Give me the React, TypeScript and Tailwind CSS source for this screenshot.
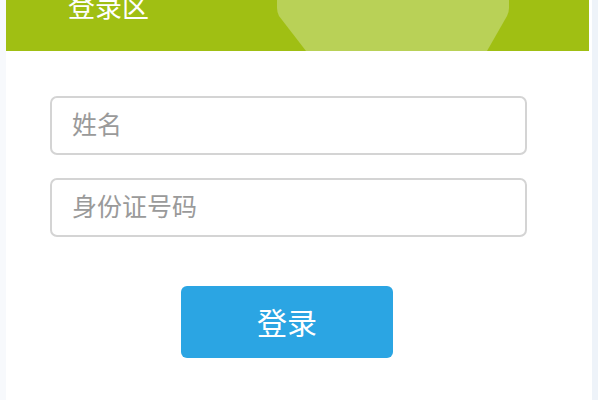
import React from "react";

export default function App() {
  const font = { fontFamily: '"Noto Sans CJK SC", "Noto Sans", sans-serif' };
  return (
    <div className="w-[600px] h-[400px] bg-white flex overflow-hidden" style={font}>
      <div className="w-[6px] shrink-0 bg-[#f7f9fc]" />
      <div className="w-[583px] shrink-0 flex flex-col">
        <div className="relative h-[51px] bg-[#a0bf13] overflow-hidden flex items-start pl-[62px]">
          <svg className="absolute left-[267px] top-0" width="240" height="51" viewBox="0 0 240 51">
            <path d="M4 -6 L236 -6 L236 8 Q236 12 234 16 L214 51 L33 51 L6 16 Q4 12 4 8 Z" fill="#b9d157" />
          </svg>
          <span className="relative text-white text-[27px] leading-none mt-[-8px]">登录区</span>
        </div>
        <div className="flex flex-col pl-[44px] pt-[45px]">
          <div className="w-[477px] h-[59px] border-2 border-[#d4d4d4] rounded-[7px] flex items-center pl-[20px] pb-[3px] text-[25px] text-[#9a9a9a]">
            姓名
          </div>
          <div className="w-[477px] h-[59px] mt-[23px] border-2 border-[#d4d4d4] rounded-[7px] flex items-center pl-[20px] pb-[3px] text-[25px] text-[#9a9a9a]">
            身份证号码
          </div>
          <div className="ml-[131px] mt-[49px] w-[212px] h-[72px] bg-[#2ba5e3] rounded-[6px] flex items-center justify-center text-white text-[30px] pb-[2px]">
            登录
          </div>
        </div>
      </div>
      <div className="w-[3px] shrink-0 bg-white" />
      <div className="w-[6px] shrink-0 bg-[#eef3f9]" />
      <div className="flex-1 bg-white" />
    </div>
  );
}
